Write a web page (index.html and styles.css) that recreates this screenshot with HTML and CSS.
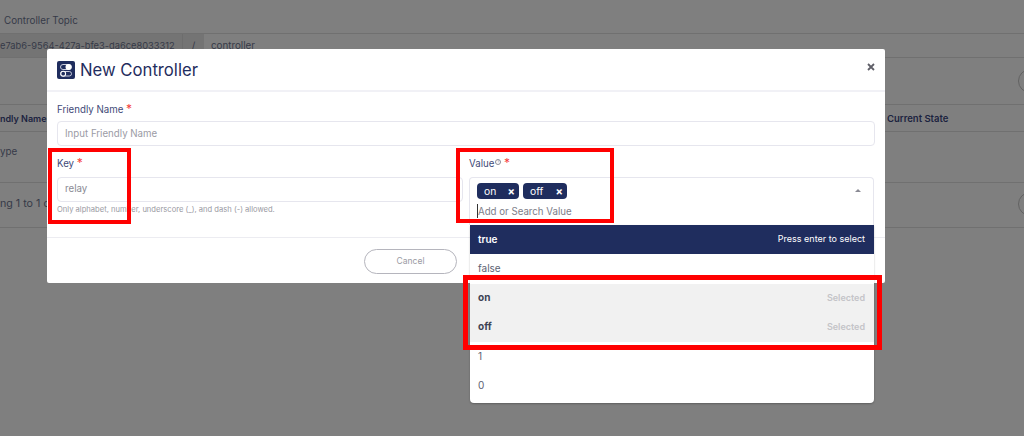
FILE: index.html
```html
<!DOCTYPE html>
<html lang="en">
<head>
    <meta charset="UTF-8">
    <meta name="viewport" content="width=device-width, initial-scale=1.0">
    <title>New Controller</title>
    <link rel="stylesheet" href="styles.css">
</head>
<body>
    <div class="page">
        <!-- dimmed page behind the modal -->
        <div class="bg">
            <div class="bg-title">Controller Topic</div>
            <div class="bg-topic">
                <div class="bg-topic-id">e7ab6-9564-427a-bfe3-da6ce8033312</div>
                <div class="bg-topic-slash">/</div>
                <div class="bg-topic-name">controller</div>
            </div>
            <div class="bg-row bg-actions"><span class="bg-circle"></span></div>
            <div class="bg-row bg-head">
                <span>ndly Name</span>
                <span class="bg-state">Current State</span>
            </div>
            <div class="bg-row bg-type">
                <span>ype</span>
            </div>
            <div class="bg-row bg-count">
                <span>ng 1 to 1 of</span>
                <span class="bg-circle"></span>
            </div>
        </div>

        <div class="modal">
            <div class="modal-head">
                <svg class="modal-icon" viewBox="0 0 18 18">
                    <rect width="18" height="18" rx="2" fill="#1f2d5e"/>
                    <rect x="3.5" y="3.5" width="11" height="5" rx="2.5" fill="none" stroke="#c9cddd" stroke-width="1"/>
                    <circle cx="11.5" cy="6" r="3" fill="#fff"/>
                    <rect x="3.5" y="10.5" width="11" height="4.5" rx="2.25" fill="none" stroke="#c9cddd" stroke-width="1"/>
                    <circle cx="6.2" cy="12.7" r="2.4" fill="#1f2d5e" stroke="#fff" stroke-width="1.1"/>
                </svg>
                <h2 class="modal-title">New Controller</h2>
                <svg class="modal-close" viewBox="0 0 8 8">
                    <path d="M1 1 L7 7 M7 1 L1 7" fill="none" stroke="#5f5f68" stroke-width="1.8"/>
                </svg>
            </div>

            <div class="modal-body">
                <div class="field">
                    <label class="field-label">Friendly Name <span class="req">*</span></label>
                    <div class="input input-name">Input Friendly Name</div>
                </div>

                <div class="field-row">
                    <div class="field">
                        <label class="field-label">Key <span class="req">*</span></label>
                        <div class="input">relay</div>
                        <p class="hint">Only alphabet, number, underscore (_), and dash (-) allowed.</p>
                    </div>
                    <div class="field">
                        <label class="field-label">Value<span class="info">?</span> <span class="req">*</span></label>
                        <div class="select">
                            <div class="tags">
                                <span class="tag tag-on">on <i>&times;</i></span>
                                <span class="tag tag-off">off <i>&times;</i></span>
                            </div>
                            <div class="search"><span class="caret"></span>Add or Search Value</div>
                            <span class="arrow"></span>

                            <ul class="options">
                                <li class="active">true <span>Press enter to select</span></li>
                                <li>false</li>
                                <li class="selected">on <span>Selected</span></li>
                                <li class="selected">off <span>Selected</span></li>
                                <li>1</li>
                                <li>0</li>
                            </ul>
                        </div>
                    </div>
                </div>
            </div>

            <div class="modal-foot">
                <button class="btn-cancel">Cancel</button>
            </div>
        </div>

        <!-- red annotation boxes -->
        <div class="mark mark-key"></div>
        <div class="mark mark-value"></div>
        <div class="mark mark-options"></div>
    </div>
</body>
</html>
```

FILE: styles.css
```css
* {
    margin: 0;
    padding: 0;
    box-sizing: border-box;
}

body {
    font-family: Inter, "Noto Sans", sans-serif;
    background: #7f7f7f;
}

.page {
    position: relative;
    width: 1024px;
    height: 436px;
    overflow: hidden;
    background: #7f7f7f;
}

/* Dimmed page */
.bg {
    color: #363a48;
    font-size: 9.8px;
}

.bg-title {
    height: 33px;
    padding: 14px 0 0 4px;
    line-height: 13px;
}

.bg-topic {
    display: flex;
    height: 25px;
    border-top: 1px solid #707070;
    border-bottom: 1px solid #707070;
    line-height: 23px;
}

.bg-topic-id {
    width: 182px;
    background: #747474;
    padding-right: 8px;
    font-size: 9.3px;
    white-space: nowrap;
}

.bg-topic-slash {
    width: 22px;
    background: #747474;
    border-left: 1px solid #6d6d6d;
    text-align: center;
}

.bg-topic-name {
    flex: 1;
    padding-left: 7px;
}

.bg-row {
    display: flex;
    justify-content: space-between;
    align-items: center;
    border-bottom: 1px solid #707070;
    white-space: nowrap;
}

.bg-actions {
    justify-content: flex-end;
    height: 47px;
}

.bg-circle {
    display: block;
    width: 24px;
    height: 24px;
    margin-right: -18px;
    border: 1px solid #626262;
    border-radius: 50%;
}

.bg-head {
    height: 27px;
    font-weight: 600;
    font-size: 9px;
    color: #1c2340;
}

.bg-state {
    width: 137px;
    font-size: 9.5px;
}

.bg-type {
    height: 51px;
    padding-bottom: 11px;
}

.bg-count {
    height: 45px;
    padding-bottom: 3px;
    font-size: 10.7px;
}

/* Modal */
.modal {
    position: absolute;
    top: 49px;
    left: 47px;
    width: 838px;
    height: 234px;
    background: #fff;
    border-radius: 2px;
    color: #1f2d5e;
}

.modal-head {
    display: flex;
    align-items: center;
    height: 43px;
    padding: 0 10px;
    border-bottom: 2px solid #f1f1f6;
}

.modal-icon {
    width: 18px;
    height: 18px;
    margin-right: 5px;
}

.modal-title {
    flex: 1;
    font-size: 16.7px;
    font-weight: 400;
    color: #1f2d5e;
}

.modal-close {
    width: 8px;
    height: 8px;
    margin-bottom: 6px;
}

.modal-body {
    height: 146px;
    padding: 10px 10px 0;
    border-bottom: 1px solid #ececf1;
}

.field-label {
    display: block;
    height: 19px;
    font-size: 9.7px;
    line-height: 16px;
    color: #3f4a78;
}

.req {
    color: #f5413c;
    font-size: 12px;
    line-height: 10px;
}

.input {
    height: 25px;
    border: 1px solid #e6e6ee;
    border-radius: 4px;
    padding-left: 7px;
    font-size: 9.7px;
    line-height: 22px;
    color: #8a8a94;
}

.input-name {
    line-height: 24px;
    color: #9b9ba5;
}

.field-row {
    display: grid;
    grid-template-columns: 406px 405px;
    gap: 6px;
    margin-top: 11px;
}

.field-row .field-label {
    height: 20px;
    line-height: 14px;
}

.hint {
    margin-top: 3px;
    font-size: 7.6px;
    color: #9a9aa3;
}

.info {
    display: inline-block;
    width: 6px;
    height: 6px;
    margin-left: 1px;
    border: 1px solid #8a8a98;
    border-radius: 50%;
    font-size: 4px;
    line-height: 4px;
    text-align: center;
    vertical-align: 4px;
    color: #8a8a98;
}

/* Value select */
.select {
    position: relative;
    height: 48px;
    padding: 5px 7px 0;
    border: 1px solid #e6e6ee;
    border-bottom: 0;
    border-radius: 4px 4px 0 0;
}

.tags {
    display: flex;
    gap: 4px;
}

.tag {
    display: flex;
    justify-content: space-between;
    align-items: center;
    height: 16px;
    padding: 0 4px 1px 7px;
    background: #1f2d5e;
    color: #fff;
    border-radius: 4px;
    font-size: 10.3px;
}

.tag i {
    font-style: normal;
    font-weight: 700;
    font-size: 11px;
}

.tag-on {
    width: 42px;
}

.tag-off {
    width: 44px;
}

.search {
    display: flex;
    align-items: center;
    height: 16px;
    margin-top: 4px;
    font-size: 9.7px;
    color: #7d7d88;
}

.caret {
    width: 1px;
    height: 14px;
    background: #333;
}

.arrow {
    position: absolute;
    top: 11px;
    right: 12px;
    width: 0;
    height: 0;
    border-left: 3px solid transparent;
    border-right: 3px solid transparent;
    border-bottom: 3px solid #8a8a94;
}

.options {
    position: absolute;
    top: 47px;
    left: 0;
    right: -1px;
    padding-bottom: 2px;
    list-style: none;
    background: #fff;
    border-radius: 0 0 4px 4px;
    box-shadow: 0 1px 2px rgba(0, 0, 0, 0.25);
}

.options li {
    display: flex;
    justify-content: space-between;
    align-items: center;
    height: 29.25px;
    padding: 0 9px 2px 8px;
    font-size: 10px;
    color: #5c6272;
}

.options span {
    font-size: 9px;
}

.options .active {
    background: #1f2d5e;
    color: #fff;
    font-weight: 600;
}

.options .active span {
    font-weight: 400;
}

.options .selected {
    background: #f1f1f1;
    color: #3d4354;
    font-weight: 700;
}

.options .selected span {
    color: #c4c4c8;
    font-weight: 600;
}

/* Footer */
.modal-foot {
    padding: 10px 0 0 317px;
}

.btn-cancel {
    width: 93px;
    height: 25px;
    background: #fff;
    border: 1px solid #b5b5bd;
    border-radius: 13px;
    font-family: inherit;
    font-size: 8.5px;
    color: #9a9aa3;
}

/* Annotations */
.mark {
    position: absolute;
    border: 4px solid #f00;
}

.mark-key {
    left: 48px;
    top: 148px;
    width: 83px;
    height: 76px;
}

.mark-value {
    left: 456px;
    top: 148px;
    width: 158px;
    height: 75px;
}

.mark-options {
    left: 463px;
    top: 275px;
    width: 419px;
    height: 75px;
    border-width: 5px;
}
```
